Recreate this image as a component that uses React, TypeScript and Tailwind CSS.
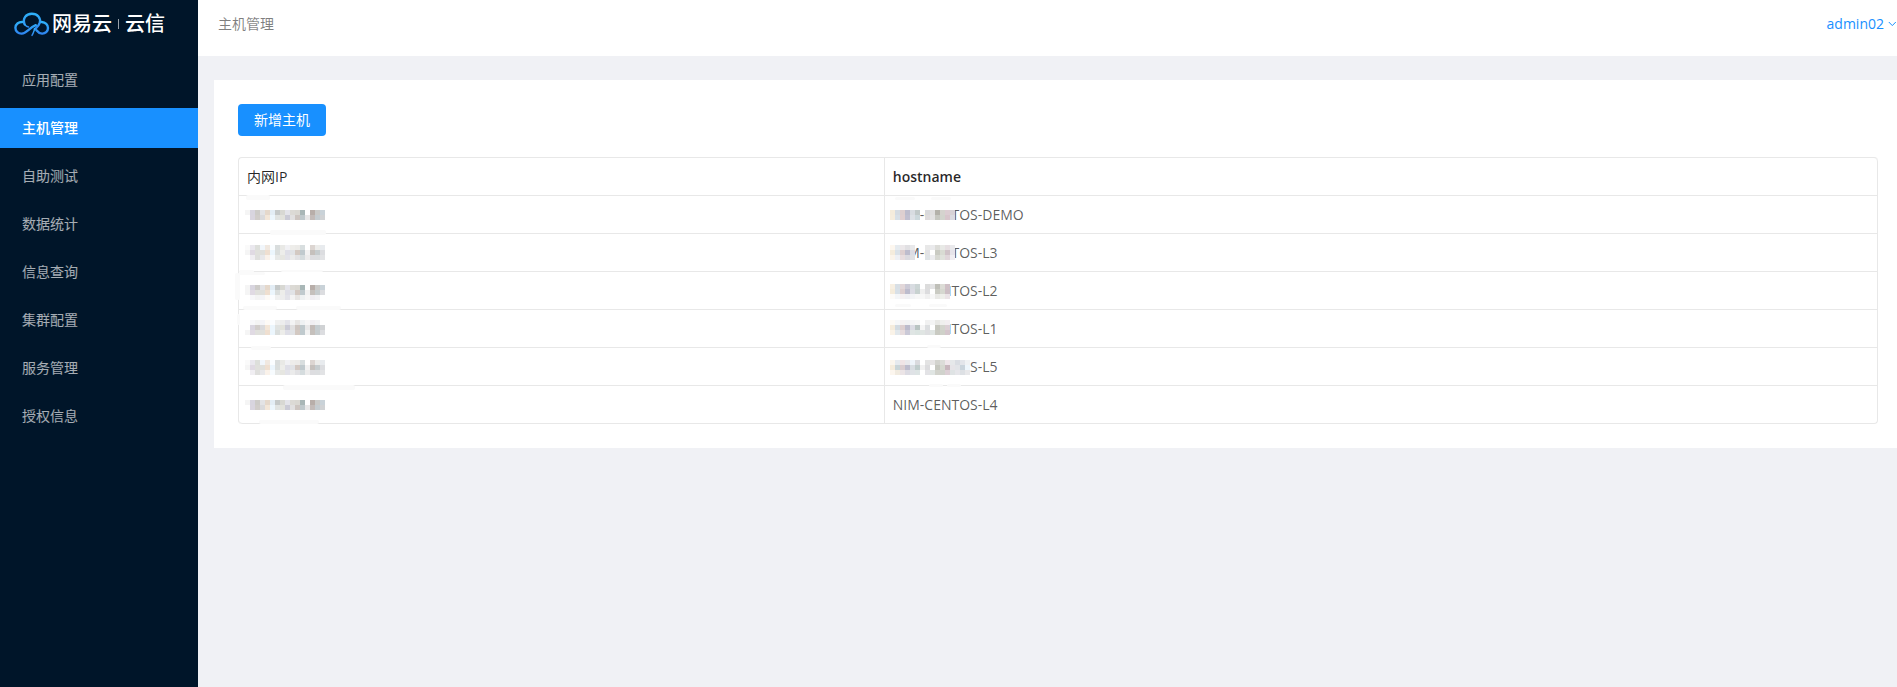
const MENU = ['应用配置', '主机管理', '自助测试', '数据统计', '信息查询', '集群配置', '服务管理', '授权信息']

const BLOCK = 5

// Masked address blocks, one string per line, '-' leaves a gap
const IP_TOP = 'f5f5f5 d8d5df cdcbc8 e3e3e5 e5d8cb e3edf5 c5c9c9 d8d8d3 e4e4ea dcdad5 dad8d2 a9b7b7 - b8aea9 cacac8 c9d2d8'
const IP_BASE = '- d9d5df d1cdca dadadc f3e6d8 ecf6fd e0e3e2 e2e2dc cbcbd6 e1e0e0 cdc5c0 bfc9cc e8e8e8 c3bbb8 c5ccd0 d0d2d4'
const IP_SOFT = 'fafafa eae8ee dddfdb f1f6fb f0e8e0 fafdff d9dddd e9e9e6 f1f1f4 eeedea ecebe8 d8dedf - dcd5d1 ececea e8ebee'
const IP_MID = 'f5f5f5 e0dae3 e0e0dc e0e0dc efdfd0 ecf6fd dadedd ededea dfdfe7 e1e3e6 d3c9c2 c0cace f2f2f2 c5c0bc c6ccce dcdde0'
const IP_LOW = '- f0eef2 dfdfdd e8e8ea faf2ea f7fbfe e6e8e7 e6e6e1 e3e3e9 ebebeb e2e2e4 d5dcde ececec dddde0 dcdee0 e2e3e5'
const IP_FAINT = '- f7f7f9 f3f3f3 f4f4f7 fdfaf6 fbfdff eff0f0 ededed e3e3e9 f3f3f3 e7e5e3 eef1f2 f6f6f6 f0eef2 f2f2f4 -'

type Smudge = [x: number, y: number, w: number, h: number]

interface Mask {
    top: number
    lines: string[]
    smudges: Smudge[]
}

const HOSTS: { name: string; ip: Mask; host?: Mask }[] = [
    {
        name: 'NIM-CENTOS-DEMO',
        ip: { top: 14, lines: [IP_TOP, IP_BASE], smudges: [[7, -1, 24, 5], [31, 34, 56, 5]] },
        host: {
            top: 14,
            lines: [
                'f5ecdc d6dce2 ddcfd0 bdbccd d8dce1 c1c9c9 - dadadc e0dfdf b3b1a9 d5d3ce dccdd2 d6d2d6',
                'f6eddd d8e0e7 e0cfd0 c0bfd0 dde1e6 ccd8dc - dfdcdd e3e2e2 c6c7c0 d2d4cd d8c6cc d9dae0',
            ],
            smudges: [[10, 1, 20, 3], [46, 1, 20, 3]],
        },
    },
    {
        name: 'NIM-CENTOS-L3',
        ip: { top: 11, lines: [IP_SOFT, IP_MID, IP_LOW], smudges: [[0, 36, 15, 3], [42, 36, 42, 2]] },
        host: {
            top: 11,
            lines: [
                'fdf7ef e6ebef ece8ea e1e0e3 e8e8ea - - e8e8e8 eaeaec dcdcd8 e8e9e6 e6dfe2 e9e9ec',
                'f5ecdc dbe2e8 ddcfd0 bdbccd dcdce4 - - e3e3e5 ffffff cacbc3 d9dbd3 d0c3c8 e6e4ea',
                'fbf4ea eef0f4 e8dddf dbdae0 e0e0e4 - - e0e4e6 ededf0 d7d8d2 e0e2dc e0d6da f0eef2',
            ],
            smudges: [],
        },
    },
    {
        name: 'NIM-CENTOS-L2',
        ip: { top: 13, lines: [IP_TOP, IP_MID, IP_FAINT], smudges: [[-4, 1, 5, 27], [0, 0, 26, 3], [4, 34, 34, 4], [57, 34, 45, 4]] },
        host: {
            top: 12,
            lines: [
                'f7efe2 d8dfe5 e2d7d9 cccad6 d8dce1 ccd5d5 - dcdcdc e3e3e4 bfbfb8 dcdcd6 cfc0c6',
                'f5ecdc d8e0e7 ddcfd0 bdbccd dcdce4 c8d2d0 efefef dcdcde ffffff cacbc3 d6d8d0 cdbfc5',
                'fdfbf8 f4f6f8 f5f1f2 f0f0f3 f3f4f6 f7f7f7 f7f7f7 f0f0f0 f7f7f7 e9e9e6 eeefea ebe4e7',
            ],
            smudges: [[10, 32, 16, 3], [44, 32, 18, 3]],
        },
    },
    {
        name: 'NIM-CENTOS-L1',
        ip: { top: 10, lines: [IP_FAINT, IP_BASE, IP_MID], smudges: [[-2, 4, 3, 11], [12, 36, 20, 4]] },
        host: {
            top: 10,
            lines: [
                'fdfaf5 f6f7f8 f5f2f3 f2f2f4 f5f5f6 f7f7f7 - f1f1f1 f4f4f4 e8e8e5 f0f0ee f3eff1',
                'f5ecdc d3dbe1 ddcfd0 bcbbcc dcdce4 b9c4c2 f5f5f5 dcdee0 ffffff c6c7bf d3d5cd dcd0d5',
                'faf3e8 e2e8ec e6dcde cac9d7 dfe5e4 dbe4e1 e0e5e3 dedfe1 e0e5e3 c9cac2 cfd1c9 d4c6cc',
            ],
            smudges: [[42, 35, 14, 3]],
        },
    },
    {
        name: 'NIM-CENTOS-L5',
        ip: { top: 12, lines: [IP_SOFT, IP_MID, IP_LOW], smudges: [[44, 37, 72, 5]] },
        host: {
            top: 12,
            lines: [
                'fbf6ee e6eaee f0e4e6 e9e8ec eef4fa d9dade - e3e3e3 e6e4e4 d3d3ce dcdcd8 efe6ea e6e8ea dadde3 e3e5ea f0f2f4',
                'f5ecdc c9d5d8 dacdd0 bdbccd d8dde2 bfcccc f1f1f1 dcdcde ffffff c6c7bf d6d8d0 c8b6bd e6e4e8 e2e4e8 cad4dc eef6fc',
                'fcf6ee f1ebe0 ebe4e6 dcdbe3 dfe2e6 dde4e4 - e3e3e6 e0e5e3 d2d3cc d0d2cc dccfd5 dfe3e4 e6e6ea dde0e4 e8e8ea',
            ],
            smudges: [[44, 36, 14, 3], [62, 36, 14, 3]],
        },
    },
    {
        name: 'NIM-CENTOS-L4',
        ip: { top: 14, lines: [IP_TOP, IP_BASE], smudges: [[20, 34, 60, 4]] },
    },
]

function Mosaic({ top, lines, smudges, left }: Mask & { left: number }) {
    return (
        <svg className="absolute top-0 left-0 z-10 overflow-visible pointer-events-none" width="120" height="37" aria-hidden="true">
            {smudges.map(([x, y, w, h], i) => (
                <rect key={i} x={x} y={y} width={w} height={h} rx={2} fill="#fafafa" />
            ))}
            {lines.map((line, row) =>
                line.split(' ').map((color, col) =>
                    color === '-' ? null : (
                        <rect
                            key={`${row}-${col}`}
                            x={left + col * BLOCK}
                            y={top + row * BLOCK}
                            width={BLOCK}
                            height={BLOCK}
                            fill={`#${color}`}
                        />
                    )
                )
            )}
        </svg>
    )
}

function Logo() {
    return (
        <div className="flex items-center h-12 pl-[14px] text-white">
            <svg width="36" height="26" viewBox="0 0 36 26" fill="none" strokeWidth="2.4" strokeLinecap="round">
                <defs>
                    <linearGradient id="cloud" x1="0" y1="0" x2="0" y2="1">
                        <stop offset="0" stopColor="#2fb0f8" />
                        <stop offset="1" stopColor="#2f86f0" />
                    </linearGradient>
                </defs>
                <g stroke="url(#cloud)">
                    <path d="M10.6 13.4C8.2 7.6 12 2.8 17.8 2.8S27 7 25.8 11.8C25 14.8 22.6 16.4 20.8 18.2" />
                    <path d="M8.4 11C4.6 10.8 1.4 13.2 1.4 16.8C1.4 20.4 4.4 22.8 7.8 22.6C12.8 22.2 14.8 17 21.8 14.2" />
                    <path d="M27.6 11C31.4 11.4 34 13.8 34 17C34 20.4 31.2 22.8 28 22.6C25.4 22.4 23.8 21 22.4 19.2" />
                    <path d="M20.8 17.6C20 19.6 19.6 21.8 18 24.4" strokeWidth="1.4" />
                    <path d="M10.6 13.4C11.6 15 13 15.8 14.6 16" strokeWidth="1.4" />
                </g>
            </svg>
            <span className="ml-[2px] text-xl leading-6 font-medium">网易云</span>
            <span className="mx-[6px] w-px h-[10px] bg-white/60" />
            <span className="text-xl leading-6 font-medium">云信</span>
        </div>
    )
}

export default function App() {
    return (
        <div className="flex min-h-screen bg-[#f0f1f5] text-sm font-['Open_Sans','Noto_Sans_CJK_SC',sans-serif] text-black/65">
            {/* Sidebar */}
            <aside className="w-[198px] shrink-0 bg-[#001529]">
                <Logo />
                <nav className="flex flex-col gap-2 pt-3">
                    {MENU.map((item) => (
                        <a
                            key={item}
                            href="#"
                            className={`flex items-center h-10 pl-[22px] ${item === '主机管理' ? 'bg-[#1890ff] text-white font-medium' : 'text-white/65'}`}
                        >
                            {item}
                        </a>
                    ))}
                </nav>
            </aside>

            <div className="flex-1 min-w-0">
                {/* Top bar */}
                <header className="flex items-center justify-between h-14 pb-2 pl-5 bg-white">
                    <h1 className="text-black/50">主机管理</h1>
                    <button type="button" className="flex items-center gap-1 text-[#1890ff]">
                        admin02
                        <svg className="w-[9px] h-[6px]" viewBox="0 0 9 6" fill="none" stroke="currentColor" strokeWidth="1">
                            <path d="M0.8 1L4.3 4.6L7.8 1" />
                        </svg>
                    </button>
                </header>

                {/* Host list */}
                <main className="mt-6 ml-4 p-6 pr-[19px] bg-white">
                    <button type="button" className="h-8 px-4 rounded bg-[#1890ff] text-white">新增主机</button>

                    <table className="w-full mt-[21px] table-fixed border-separate border-spacing-0 border-t border-l border-[#e8e8e8] rounded text-left leading-[21px]">
                        <thead>
                            <tr className="text-black/85">
                                <th className="w-[39.4%] p-2 font-normal border-r border-b border-[#e8e8e8]">
                                    内网<span className="font-medium">IP</span>
                                </th>
                                <th className="p-2 font-semibold border-r border-b border-[#e8e8e8] rounded-tr">hostname</th>
                            </tr>
                        </thead>
                        <tbody className="[&>tr:last-child>td:first-child]:rounded-bl [&>tr:last-child>td:last-child]:rounded-br">
                            {HOSTS.map(({ name, ip, host }) => (
                                <tr key={name}>
                                    <td className="relative h-[38px] p-2 border-r border-b border-[#e8e8e8]">
                                        <Mosaic {...ip} left={6} />
                                    </td>
                                    <td className="relative p-2 border-r border-b border-[#e8e8e8]">
                                        {name}
                                        {host && <Mosaic {...host} left={5} />}
                                    </td>
                                </tr>
                            ))}
                        </tbody>
                    </table>
                </main>
            </div>
        </div>
    )
}
